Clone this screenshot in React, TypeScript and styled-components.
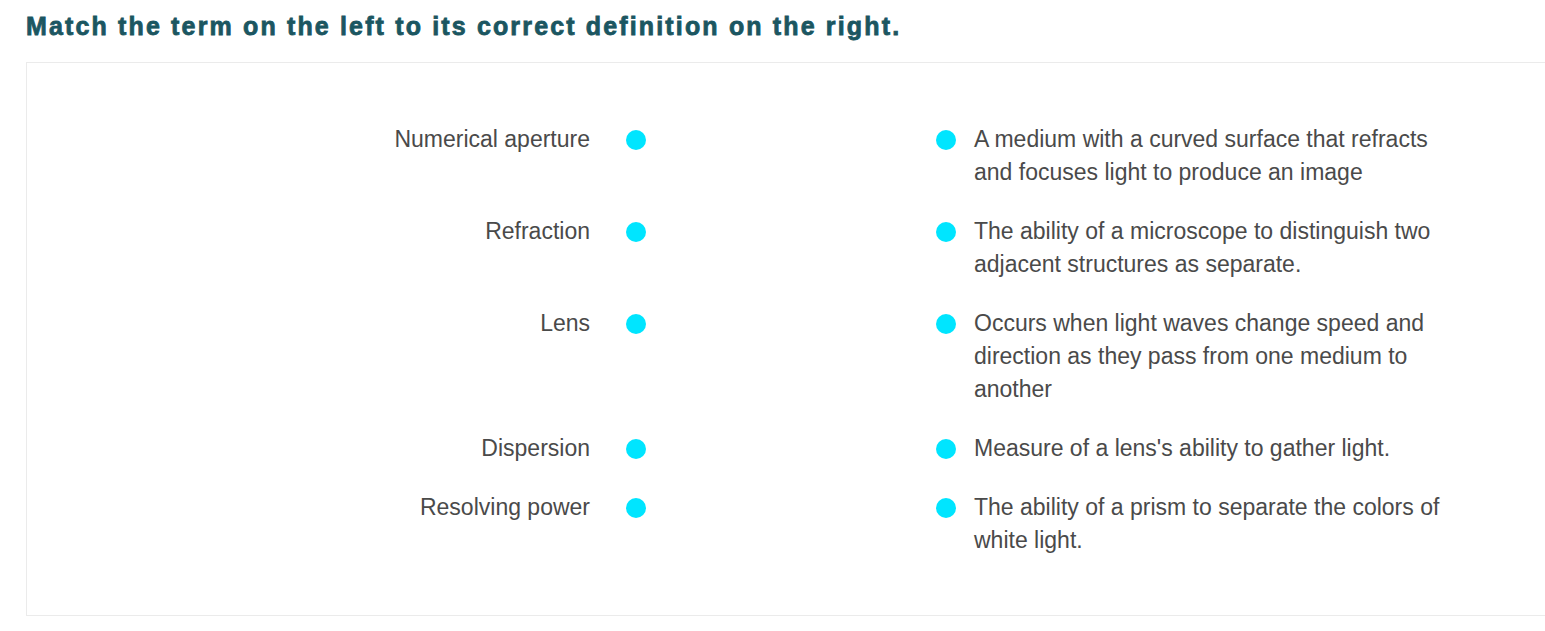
import * as React from 'react';
import styled, { createGlobalStyle } from 'styled-components';

const GlobalStyle = createGlobalStyle`
    html, body {
        margin: 0;
        padding: 0;
        background: #ffffff;
        overflow: hidden;
    }
    body {
        font-family: "Liberation Sans", Arial, sans-serif;
    }
`;

const Page = styled('div')`
    padding: 11px 0 0 26px;
    box-sizing: border-box;
    width: 100vw;
`;

const Heading = styled('h1')`
    margin: 0 0 21px 0;
    font-size: 25px;
    line-height: 30px;
    font-weight: 700;
    letter-spacing: 2.15px;
    -webkit-text-stroke: 0.8px #1b5661;
    color: #1b5661;
`;

const Board = styled('div')`
    width: 1540px;
    box-sizing: border-box;
    border: solid 1px #ebebeb;
    padding: 60px 0 58px 0;
`;

const PairGrid = styled('div')`
    display: grid;
    grid-template-columns: 599px 20px 290px 20px 498px;
    row-gap: 26px;
    align-items: start;
`;

const Term = styled('div')`
    font-size: 23px;
    line-height: 33px;
    color: #4a4a4a;
    text-align: right;
    padding-right: 36px;
`;

const Definition = styled('div')`
    font-size: 23px;
    line-height: 33px;
    color: #4a4a4a;
    padding-left: 18px;
`;

const Dot = styled('span')<{ side: 'left' | 'right' }>`
    display: block;
    width: 20px;
    height: 20px;
    margin-top: 7px;
    border-radius: 50%;
    background: #00e5ff;
    grid-column: ${props => props.side === 'left' ? 2 : 4};
`;

const terms = [
    'Numerical aperture',
    'Refraction',
    'Lens',
    'Dispersion',
    'Resolving power',
];

const definitions = [
    'A medium with a curved surface that refracts and focuses light to produce an image',
    'The ability of a microscope to distinguish two adjacent structures as separate.',
    'Occurs when light waves change speed and direction as they pass from one medium to another',
    "Measure of a lens's ability to gather light.",
    'The ability of a prism to separate the colors of white light.',
];

export default function App() {
    return (
        <Page>
            <GlobalStyle />
            <Heading>Match the term on the left to its correct definition on the right.</Heading>
            <Board>
                <PairGrid>
                    {terms.map((term, i) => (
                        <React.Fragment key={term}>
                            <Term>{term}</Term>
                            <Dot side="left" />
                            <div />
                            <Dot side="right" />
                            <Definition>{definitions[i]}</Definition>
                        </React.Fragment>
                    ))}
                </PairGrid>
            </Board>
        </Page>
    );
}
